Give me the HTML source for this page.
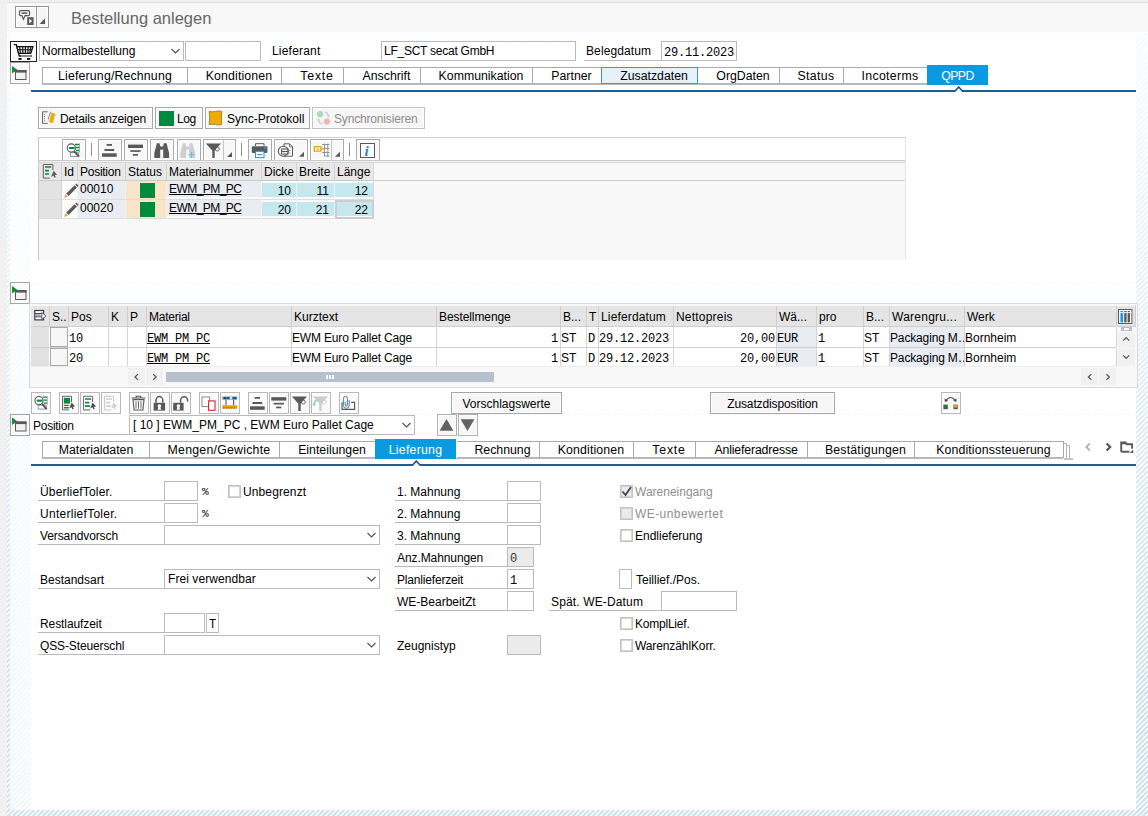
<!DOCTYPE html><html><head><meta charset="utf-8"><title>Bestellung anlegen</title><style>
*{box-sizing:border-box;margin:0;padding:0}
html,body{width:1148px;height:816px;overflow:hidden;background:#fff}
body{position:relative;font-family:"Liberation Sans",sans-serif;font-size:12px;color:#000}
.a{position:absolute}
.t{position:absolute;white-space:pre;line-height:14px;font-size:12px}
.m{position:absolute;white-space:pre;line-height:14px;font-size:12px;letter-spacing:-0.2px;font-family:"Liberation Mono",monospace}
.f{position:absolute;border:1px solid #bababa;background:#fff}
.fg{position:absolute;border:1px solid #b9b9b9;background:#ebebeb}
.u{position:absolute;height:1px;background:#b9b9b9}
.btn{position:absolute;border:1px solid #a6a6a6;background:#f6f6f6;box-shadow:inset 0 0 0 1px #fdfdfd}
.tab{position:absolute;top:0;height:17px;border:1px solid #a9a9a9;border-bottom-color:#b4b4b4;border-left:none;background:#fff;text-align:center;font-size:12.3px;line-height:16px;white-space:pre}
.tabs{position:absolute;height:19px}
.tabs .sh{position:absolute;left:0;top:17px;height:1px;background:#bcbcbc}
.cb{position:absolute;width:13px;height:13px;border:1px solid #c2c2c2;background:#fff;box-shadow:inset 0 0 0 1px #d4d4d4}
.h1{background-image:repeating-linear-gradient(135deg,#cfe4f2 0,#cfe4f2 2.12px,#fff 2.12px,#fff 3.5355px)}
.sv{position:absolute;overflow:visible}
</style></head><body>
<div class="a" style="left:0;top:0;width:1148px;height:32px;background:#f8f8f8"></div>
<div class="a" style="left:0;top:0;width:1148px;height:2px;background:#f0f0f0"></div>
<div class="a" style="left:0;top:2px;width:1148px;height:1px;background:#dedede"></div>
<div class="a" style="left:0;top:0;width:7px;height:816px;background:#f1f1f1"></div>
<svg class="a" style="left:0;top:0" width="1148" height="816" viewBox="0 0 1148 816" shape-rendering="crispEdges"><defs><pattern id="hp" x="0" y="0" width="5" height="5" patternUnits="userSpaceOnUse"><g fill="#cfe4f2"><rect x="2" y="0" width="1" height="1"/><rect x="3" y="0" width="1" height="1"/><rect x="4" y="0" width="1" height="1"/><rect x="1" y="1" width="1" height="1"/><rect x="2" y="1" width="1" height="1"/><rect x="3" y="1" width="1" height="1"/><rect x="0" y="2" width="1" height="1"/><rect x="1" y="2" width="1" height="1"/><rect x="2" y="2" width="1" height="1"/><rect x="4" y="3" width="1" height="1"/><rect x="0" y="3" width="1" height="1"/><rect x="1" y="3" width="1" height="1"/><rect x="3" y="4" width="1" height="1"/><rect x="4" y="4" width="1" height="1"/><rect x="0" y="4" width="1" height="1"/></g></pattern><linearGradient id="fg" gradientUnits="userSpaceOnUse" x1="0" y1="33" x2="0" y2="680"><stop offset="0" stop-color="#fff" stop-opacity="0.14"/><stop offset="1" stop-color="#fff" stop-opacity="1"/></linearGradient><linearGradient id="fg2" gradientUnits="userSpaceOnUse" x1="0" y1="93" x2="0" y2="810"><stop offset="0" stop-color="#fff" stop-opacity="0.06"/><stop offset="1" stop-color="#fff" stop-opacity="0.29"/></linearGradient><mask id="fm" maskUnits="userSpaceOnUse" x="0" y="0" width="1148" height="816"><rect x="0" y="0" width="1148" height="816" fill="url(#fg)"/></mask><mask id="fw" maskUnits="userSpaceOnUse" x="0" y="0" width="1148" height="816"><rect x="0" y="0" width="1148" height="816" fill="url(#fg2)"/></mask></defs><rect x="1136" y="33" width="12" height="783" fill="url(#hp)" mask="url(#fm)"/><rect x="7" y="33" width="3" height="783" fill="url(#hp)" mask="url(#fm)"/><rect x="10" y="93" width="21" height="717" fill="url(#hp)" mask="url(#fw)"/><rect x="10" y="810" width="1126" height="6" fill="url(#hp)" opacity="1"/><rect x="10" y="32" width="1126" height="9" fill="url(#hp)" opacity="0.07"/><rect x="31" y="283" width="1105" height="21" fill="url(#hp)" opacity="0.09"/><rect x="31" y="414" width="1105" height="1" fill="url(#hp)" opacity="0.25"/><rect x="31" y="282" width="1105" height="1" fill="url(#hp)" opacity="0.2"/></svg>
<div class="btn" style="left:15px;top:6px;width:22px;height:22px;background:#f5f5f5;border-color:#959595;box-shadow:inset 0 0 0 1px #fff"></div>
<div class="btn" style="left:36px;top:6px;width:13px;height:22px;background:#f5f5f5;border-color:#959595;box-shadow:inset 0 0 0 1px #fff"></div>
<div class="t" style="left:71px;top:8px;font-size:16.5px;line-height:20px;color:#666">Bestellung anlegen</div>
<div class="a" style="left:10px;top:41px;width:27px;height:21px;border:1px solid #222;background:#fafafa"></div>
<div class="f" style="left:39px;top:41px;width:145px;height:20px"></div>
<div class="t" style="left:42px;top:44px">Normalbestellung</div>
<div class="f" style="left:185px;top:41px;width:76px;height:20px"></div>
<div class="t" style="left:272px;top:44px;letter-spacing:0.200px">Lieferant</div>
<div class="u" style="left:269px;top:60px;width:113px"></div>
<div class="f" style="left:381px;top:41px;width:195px;height:20px"></div>
<div class="t" style="left:384px;top:44px;letter-spacing:-0.247px">LF_SCT secat GmbH</div>
<div class="t" style="left:586px;top:44px;letter-spacing:0.100px">Belegdatum</div>
<div class="u" style="left:584px;top:60px;width:78px"></div>
<div class="f" style="left:661px;top:41px;width:76px;height:20px"></div>
<div class="m" style="left:664px;top:46px">29.11.2023</div>
<div class="btn" style="left:10px;top:62px;width:20px;height:22px;border-color:#a4a4a4;background:#fafafa"></div>
<div class="tabs" style="left:42px;top:67px;width:946px">
<div class="sh" style="width:946px"></div>
<div class="a" style="left:0;top:0;width:1px;height:17px;background:#a9a9a9"></div>
<div class="tab" style="left:1px;width:145px;letter-spacing:0.17px;">Lieferung/Rechnung</div>
<div class="tab" style="left:146px;width:94px;padding-left:9px;letter-spacing:0.15px;">Konditionen</div>
<div class="tab" style="left:240px;width:62px;padding-left:9px;letter-spacing:0.8px;">Texte</div>
<div class="tab" style="left:302px;width:77px;padding-left:9px;">Anschrift</div>
<div class="tab" style="left:379px;width:112px;padding-left:9px;">Kommunikation</div>
<div class="tab" style="left:491px;width:69px;padding-left:9px;">Partner</div>
<div class="tab" style="left:559px;width:97px;border:1px solid #3a94d6;background:#e5f1fb;z-index:1;padding-left:9px;">Zusatzdaten</div>
<div class="tab" style="left:656px;width:82px;padding-left:9px;">OrgDaten</div>
<div class="tab" style="left:738px;width:64px;padding-left:9px;letter-spacing:0.35px;">Status</div>
<div class="tab" style="left:802px;width:84px;padding-left:9px;letter-spacing:0.35px;">Incoterms</div>
<div class="tab" style="left:885px;width:61px;top:-2px;height:20px;line-height:23px;border:none;background:#0a9ae0;color:#fff;z-index:2;letter-spacing:-0.6px;">QPPD</div>
</div>
<div class="a" style="left:31px;top:90px;width:1105px;height:2px;background:#1f5c90"></div>
<svg class="sv" style="left:951px;top:85px" width="14" height="7" viewBox="0 0 14 7"><path d="M2.00 7 L7.70 0.7 L13.40 7 Z" fill="#1f5c90"/><path d="M4.30 7 L7.70 3.2 L11.10 7 Z" fill="#fff"/></svg>
<div class="btn" style="left:38px;top:107px;width:115px;height:22px"></div>
<div class="t" style="left:60px;top:112px;letter-spacing:-0.169px">Details anzeigen</div>
<div class="btn" style="left:155px;top:107px;width:48px;height:22px"></div>
<div class="a" style="left:159px;top:111px;width:15px;height:15px;background:#008a3e"></div>
<div class="t" style="left:177px;top:112px;letter-spacing:-0.433px">Log</div>
<div class="btn" style="left:205px;top:107px;width:105px;height:22px"></div>
<svg class="sv" style="left:208px;top:110px" width="16" height="16" viewBox="0 0 16 16"><path d="M1.2 1.4 q3.4 0.8 6.4 0 t6.2 0 q-0.9 6.6 0 13.2 q-3.2 0.8 -6.2 0 t-6.4 0 q0.9 -6.6 0 -13.2z" fill="#f0ab00" stroke="#8a7440" stroke-width="0.8"/></svg>
<div class="t" style="left:227px;top:112px">Sync-Protokoll</div>
<div class="btn" style="left:312px;top:107px;width:113px;height:22px;border-color:#c3c3c3"></div>
<div class="t" style="left:334px;top:112px;color:#8c8c8c;letter-spacing:-0.167px">Synchronisieren</div>
<div class="a" style="left:38px;top:137px;width:868px;height:123px;background:#f8f8f8;border-top:1px solid #d0d0d0;border-left:1px solid #c8c8c8;border-right:1px solid #e4e4e4"></div>
<div class="a" style="left:39px;top:138px;width:866px;height:23px;background:#fff;border-bottom:1px solid #c9c9c9"></div>
<div class="a" style="left:39px;top:161px;width:866px;height:1px;background:#f2f2f2"></div>
<div class="a" style="left:39px;top:162px;width:866px;height:1px;background:#d6d6d6"></div>
<div class="a" style="left:39px;top:180px;width:866px;height:1px;background:#cbcbcb"></div>
<div class="btn" style="left:62px;top:139px;width:24px;height:21px;border-color:#a9a9a9;border-bottom:none;background:#f8f8f8"></div>
<div class="btn" style="left:98px;top:139px;width:24px;height:21px;border-color:#a9a9a9;border-bottom:none;background:#f8f8f8"></div>
<div class="btn" style="left:124px;top:139px;width:24px;height:21px;border-color:#a9a9a9;border-bottom:none;background:#f8f8f8"></div>
<div class="btn" style="left:150px;top:139px;width:24px;height:21px;border-color:#a9a9a9;border-bottom:none;background:#f8f8f8"></div>
<div class="btn" style="left:177px;top:139px;width:24px;height:21px;border-color:#a9a9a9;border-bottom:none;background:#f8f8f8"></div>
<div class="btn" style="left:203px;top:139px;width:33px;height:21px;border-color:#a9a9a9;border-bottom:none;background:#f8f8f8"></div>
<div class="btn" style="left:248px;top:139px;width:24px;height:21px;border-color:#a9a9a9;border-bottom:none;background:#f8f8f8"></div>
<div class="btn" style="left:274px;top:139px;width:34px;height:21px;border-color:#a9a9a9;border-bottom:none;background:#f8f8f8"></div>
<div class="btn" style="left:310px;top:139px;width:34px;height:21px;border-color:#a9a9a9;border-bottom:none;background:#f8f8f8"></div>
<div class="btn" style="left:356px;top:139px;width:24px;height:21px;border-color:#a9a9a9;border-bottom:none;background:#f8f8f8"></div>
<div class="a" style="left:223px;top:140px;width:1px;height:20px;background:#c6c6c6"></div>
<div class="a" style="left:331px;top:140px;width:1px;height:20px;background:#c6c6c6"></div>
<div class="a" style="left:91px;top:143px;width:1px;height:13px;background:#8f8f8f"></div>
<div class="a" style="left:241px;top:143px;width:1px;height:13px;background:#8f8f8f"></div>
<div class="a" style="left:349px;top:143px;width:1px;height:13px;background:#8f8f8f"></div>
<div class="a" style="left:39px;top:163px;width:335px;height:17px;background:#e8e8e8"></div>
<div class="a" style="left:61px;top:163px;width:1px;height:17px;background:#d2d2d2"></div>
<div class="a" style="left:77px;top:163px;width:1px;height:17px;background:#d2d2d2"></div>
<div class="t" style="left:64px;top:165px">Id</div>
<div class="a" style="left:125px;top:163px;width:1px;height:17px;background:#d2d2d2"></div>
<div class="t" style="left:80px;top:165px;letter-spacing:-0.263px">Position</div>
<div class="a" style="left:166px;top:163px;width:1px;height:17px;background:#d2d2d2"></div>
<div class="t" style="left:128px;top:165px">Status</div>
<div class="a" style="left:261px;top:163px;width:1px;height:17px;background:#d2d2d2"></div>
<div class="t" style="left:169px;top:165px;letter-spacing:-0.121px">Materialnummer</div>
<div class="a" style="left:296px;top:163px;width:1px;height:17px;background:#d2d2d2"></div>
<div class="t" style="left:264px;top:165px">Dicke</div>
<div class="a" style="left:334px;top:163px;width:1px;height:17px;background:#d2d2d2"></div>
<div class="t" style="left:299px;top:165px">Breite</div>
<div class="a" style="left:373px;top:163px;width:1px;height:17px;background:#d2d2d2"></div>
<div class="t" style="left:337px;top:165px">Länge</div>
<div class="a" style="left:39px;top:181px;width:335px;height:18px;background:#fbfbfb"></div>
<div class="a" style="left:39px;top:181px;width:22px;height:18px;background:#e3e3e3"></div>
<div class="a" style="left:78px;top:181px;width:47px;height:18px;background:#e9edf1"></div>
<div class="t" style="left:80px;top:182px">00010</div>
<div class="a" style="left:126px;top:181px;width:40px;height:18px;background:#f9e5c9"></div>
<div class="a" style="left:140px;top:183px;width:15px;height:15px;background:#008a3e"></div>
<div class="a" style="left:167px;top:181px;width:94px;height:16px;background:#e9edf1"></div>
<div class="t" style="left:169px;top:182px;text-decoration:underline;letter-spacing:-0.55px">EWM_PM_PC</div>
<div class="a" style="left:262px;top:183px;width:34px;height:14px;background:#c4e8ee"></div>
<div class="t" style="left:262px;top:184px;width:29px;text-align:right">10</div>
<div class="a" style="left:297px;top:183px;width:37px;height:14px;background:#c4e8ee"></div>
<div class="t" style="left:297px;top:184px;width:32px;text-align:right">11</div>
<div class="a" style="left:335px;top:183px;width:38px;height:14px;background:#c4e8ee"></div>
<div class="t" style="left:335px;top:184px;width:33px;text-align:right">12</div>
<div class="a" style="left:39px;top:199px;width:335px;height:1px;background:#dcdcdc"></div>
<div class="a" style="left:39px;top:200px;width:335px;height:18px;background:#fbfbfb"></div>
<div class="a" style="left:39px;top:200px;width:22px;height:18px;background:#e3e3e3"></div>
<div class="a" style="left:78px;top:200px;width:47px;height:18px;background:#e9edf1"></div>
<div class="t" style="left:80px;top:201px">00020</div>
<div class="a" style="left:126px;top:200px;width:40px;height:18px;background:#f9e5c9"></div>
<div class="a" style="left:140px;top:202px;width:15px;height:15px;background:#008a3e"></div>
<div class="a" style="left:167px;top:200px;width:94px;height:16px;background:#e9edf1"></div>
<div class="t" style="left:169px;top:201px;text-decoration:underline;letter-spacing:-0.55px">EWM_PM_PC</div>
<div class="a" style="left:262px;top:202px;width:34px;height:14px;background:#c4e8ee"></div>
<div class="t" style="left:262px;top:203px;width:29px;text-align:right">20</div>
<div class="a" style="left:297px;top:202px;width:37px;height:14px;background:#c4e8ee"></div>
<div class="t" style="left:297px;top:203px;width:32px;text-align:right">21</div>
<div class="a" style="left:335px;top:202px;width:38px;height:14px;background:#c4e8ee"></div>
<div class="t" style="left:335px;top:203px;width:33px;text-align:right">22</div>
<div class="a" style="left:39px;top:218px;width:335px;height:1px;background:#dcdcdc"></div>
<div class="a" style="left:61px;top:181px;width:1px;height:38px;background:#f1f1f1"></div>
<div class="a" style="left:77px;top:181px;width:1px;height:38px;background:#f1f1f1"></div>
<div class="a" style="left:125px;top:181px;width:1px;height:38px;background:#f1f1f1"></div>
<div class="a" style="left:166px;top:181px;width:1px;height:38px;background:#f1f1f1"></div>
<div class="a" style="left:261px;top:181px;width:1px;height:38px;background:#f1f1f1"></div>
<div class="a" style="left:296px;top:181px;width:1px;height:38px;background:#f1f1f1"></div>
<div class="a" style="left:334px;top:181px;width:1px;height:38px;background:#f1f1f1"></div>
<div class="a" style="left:61px;top:181px;width:1px;height:38px;background:#d4d4d4"></div>
<div class="a" style="left:373px;top:162px;width:1px;height:57px;background:#dadada"></div>
<div class="a" style="left:335px;top:200px;width:39px;height:19px;border:2px solid #cdcdcd"></div>
<div class="btn" style="left:10px;top:282px;width:20px;height:22px;border-color:#a4a4a4;background:#fafafa"></div>
<div class="a" style="left:29px;top:303px;width:1109px;height:85px;background:#f8f8f8;border:1px solid #dadada"></div>
<div class="a" style="left:31px;top:306px;width:1105px;height:20px;background:#e5e5e5"></div>
<div class="a" style="left:1135px;top:305px;width:1px;height:22px;background:#cfcfcf"></div>
<div class="a" style="left:1117px;top:326px;width:19px;height:1px;background:#cfcfcf"></div>
<div class="a" style="left:49px;top:306px;width:1px;height:20px;background:#cfcfcf"></div>
<div class="a" style="left:68px;top:306px;width:1px;height:20px;background:#cfcfcf"></div>
<div class="t" style="left:52px;top:310px">S..</div>
<div class="a" style="left:108px;top:306px;width:1px;height:20px;background:#cfcfcf"></div>
<div class="t" style="left:71px;top:310px">Pos</div>
<div class="a" style="left:127px;top:306px;width:1px;height:20px;background:#cfcfcf"></div>
<div class="t" style="left:111px;top:310px">K</div>
<div class="a" style="left:146px;top:306px;width:1px;height:20px;background:#cfcfcf"></div>
<div class="t" style="left:130px;top:310px">P</div>
<div class="a" style="left:291px;top:306px;width:1px;height:20px;background:#cfcfcf"></div>
<div class="t" style="left:149px;top:310px;letter-spacing:-0.237px">Material</div>
<div class="a" style="left:436px;top:306px;width:1px;height:20px;background:#cfcfcf"></div>
<div class="t" style="left:294px;top:310px">Kurztext</div>
<div class="a" style="left:560px;top:306px;width:1px;height:20px;background:#cfcfcf"></div>
<div class="t" style="left:439px;top:310px;letter-spacing:-0.083px">Bestellmenge</div>
<div class="a" style="left:586px;top:306px;width:1px;height:20px;background:#cfcfcf"></div>
<div class="t" style="left:563px;top:310px">B...</div>
<div class="a" style="left:598px;top:306px;width:1px;height:20px;background:#cfcfcf"></div>
<div class="t" style="left:589px;top:310px">T</div>
<div class="a" style="left:673px;top:306px;width:1px;height:20px;background:#cfcfcf"></div>
<div class="t" style="left:601px;top:310px;letter-spacing:0.145px">Lieferdatum</div>
<div class="a" style="left:776px;top:306px;width:1px;height:20px;background:#cfcfcf"></div>
<div class="t" style="left:676px;top:310px;letter-spacing:0.200px">Nettopreis</div>
<div class="a" style="left:816px;top:306px;width:1px;height:20px;background:#cfcfcf"></div>
<div class="t" style="left:779px;top:310px">Wä...</div>
<div class="a" style="left:863px;top:306px;width:1px;height:20px;background:#cfcfcf"></div>
<div class="t" style="left:819px;top:310px">pro</div>
<div class="a" style="left:889px;top:306px;width:1px;height:20px;background:#cfcfcf"></div>
<div class="t" style="left:866px;top:310px">B...</div>
<div class="a" style="left:964px;top:306px;width:1px;height:20px;background:#cfcfcf"></div>
<div class="t" style="left:892px;top:310px;letter-spacing:0.255px">Warengru...</div>
<div class="a" style="left:1116px;top:306px;width:1px;height:20px;background:#cfcfcf"></div>
<div class="t" style="left:967px;top:310px">Werk</div>
<div class="a" style="left:31px;top:326px;width:18px;height:21px;background:#e1e1e1;border-top:1px solid #cfcfcf"></div>
<div class="a" style="left:49px;top:326px;width:1067px;height:21px;background:#fff;border-top:1px solid #cfcfcf"></div>
<div class="a" style="left:50px;top:327px;width:18px;height:20px;background:#f6f6f6;border:1px solid #a9a9a9"></div>
<div class="a" style="left:777px;top:327px;width:39px;height:20px;background:#e9edf3"></div>
<div class="a" style="left:890px;top:327px;width:74px;height:20px;background:#e9edf3"></div>
<div class="a" style="left:108px;top:327px;width:1px;height:20px;background:#d4d4d4"></div>
<div class="a" style="left:127px;top:327px;width:1px;height:20px;background:#d4d4d4"></div>
<div class="a" style="left:146px;top:327px;width:1px;height:20px;background:#d4d4d4"></div>
<div class="a" style="left:291px;top:327px;width:1px;height:20px;background:#d4d4d4"></div>
<div class="a" style="left:436px;top:327px;width:1px;height:20px;background:#d4d4d4"></div>
<div class="a" style="left:560px;top:327px;width:1px;height:20px;background:#d4d4d4"></div>
<div class="a" style="left:586px;top:327px;width:1px;height:20px;background:#d4d4d4"></div>
<div class="a" style="left:598px;top:327px;width:1px;height:20px;background:#d4d4d4"></div>
<div class="a" style="left:673px;top:327px;width:1px;height:20px;background:#d4d4d4"></div>
<div class="a" style="left:776px;top:327px;width:1px;height:20px;background:#d4d4d4"></div>
<div class="a" style="left:816px;top:327px;width:1px;height:20px;background:#d4d4d4"></div>
<div class="a" style="left:863px;top:327px;width:1px;height:20px;background:#d4d4d4"></div>
<div class="a" style="left:889px;top:327px;width:1px;height:20px;background:#d4d4d4"></div>
<div class="a" style="left:964px;top:327px;width:1px;height:20px;background:#d4d4d4"></div>
<div class="a" style="left:1116px;top:327px;width:1px;height:20px;background:#d4d4d4"></div>
<div class="m" style="left:69px;top:332px">10</div>
<div class="m" style="left:147px;top:332px;text-decoration:underline">EWM_PM_PC</div>
<div class="t" style="left:292px;top:331px;letter-spacing:-0.170px">EWM Euro Pallet Cage</div>
<div class="m" style="left:551px;top:332px">1</div>
<div class="t" style="left:561px;top:331px">ST</div>
<div class="m" style="left:588px;top:332px">D</div>
<div class="m" style="left:599px;top:332px">29.12.2023</div>
<div class="m" style="left:740px;top:332px">20,00</div>
<div class="m" style="left:777px;top:332px">EUR</div>
<div class="m" style="left:818px;top:332px">1</div>
<div class="t" style="left:864px;top:331px">ST</div>
<div class="t" style="left:890px;top:331px;width:74px;overflow:hidden;letter-spacing:-0.15px">Packaging M…</div>
<div class="t" style="left:965px;top:331px">Bornheim</div>
<div class="a" style="left:31px;top:347px;width:18px;height:19px;background:#e1e1e1;border-top:1px solid #cfcfcf"></div>
<div class="a" style="left:49px;top:347px;width:1067px;height:19px;background:#fff;border-top:1px solid #cfcfcf"></div>
<div class="a" style="left:50px;top:348px;width:18px;height:18px;background:#f6f6f6;border:1px solid #a9a9a9"></div>
<div class="a" style="left:777px;top:348px;width:39px;height:18px;background:#e9edf3"></div>
<div class="a" style="left:890px;top:348px;width:74px;height:18px;background:#e9edf3"></div>
<div class="a" style="left:108px;top:348px;width:1px;height:18px;background:#d4d4d4"></div>
<div class="a" style="left:127px;top:348px;width:1px;height:18px;background:#d4d4d4"></div>
<div class="a" style="left:146px;top:348px;width:1px;height:18px;background:#d4d4d4"></div>
<div class="a" style="left:291px;top:348px;width:1px;height:18px;background:#d4d4d4"></div>
<div class="a" style="left:436px;top:348px;width:1px;height:18px;background:#d4d4d4"></div>
<div class="a" style="left:560px;top:348px;width:1px;height:18px;background:#d4d4d4"></div>
<div class="a" style="left:586px;top:348px;width:1px;height:18px;background:#d4d4d4"></div>
<div class="a" style="left:598px;top:348px;width:1px;height:18px;background:#d4d4d4"></div>
<div class="a" style="left:673px;top:348px;width:1px;height:18px;background:#d4d4d4"></div>
<div class="a" style="left:776px;top:348px;width:1px;height:18px;background:#d4d4d4"></div>
<div class="a" style="left:816px;top:348px;width:1px;height:18px;background:#d4d4d4"></div>
<div class="a" style="left:863px;top:348px;width:1px;height:18px;background:#d4d4d4"></div>
<div class="a" style="left:889px;top:348px;width:1px;height:18px;background:#d4d4d4"></div>
<div class="a" style="left:964px;top:348px;width:1px;height:18px;background:#d4d4d4"></div>
<div class="a" style="left:1116px;top:348px;width:1px;height:18px;background:#d4d4d4"></div>
<div class="m" style="left:69px;top:352px">20</div>
<div class="m" style="left:147px;top:352px;text-decoration:underline">EWM_PM_PC</div>
<div class="t" style="left:292px;top:351px;letter-spacing:-0.170px">EWM Euro Pallet Cage</div>
<div class="m" style="left:551px;top:352px">1</div>
<div class="t" style="left:561px;top:351px">ST</div>
<div class="m" style="left:588px;top:352px">D</div>
<div class="m" style="left:599px;top:352px">29.12.2023</div>
<div class="m" style="left:740px;top:352px">20,00</div>
<div class="m" style="left:777px;top:352px">EUR</div>
<div class="m" style="left:818px;top:352px">1</div>
<div class="t" style="left:864px;top:351px">ST</div>
<div class="t" style="left:890px;top:351px;width:74px;overflow:hidden;letter-spacing:-0.15px">Packaging M…</div>
<div class="t" style="left:965px;top:351px">Bornheim</div>
<div class="a" style="left:30px;top:366px;width:1087px;height:1px;background:#ececec"></div>
<div class="a" style="left:128px;top:368px;width:17px;height:17px;background:#f1f1f1"></div>
<div class="a" style="left:146px;top:368px;width:17px;height:17px;background:#f1f1f1"></div>
<div class="a" style="left:1081px;top:368px;width:17px;height:17px;background:#f1f1f1"></div>
<div class="a" style="left:1099px;top:368px;width:17px;height:17px;background:#f1f1f1"></div>
<div class="a" style="left:166px;top:372px;width:328px;height:10px;background:#b7c1cd"></div>
<div class="a" style="left:326px;top:375px;width:9px;height:4px;background:repeating-linear-gradient(90deg,#fff 0,#fff 2px,transparent 2px,transparent 3px)"></div>
<div class="a" style="left:1118px;top:332px;width:17px;height:16px;background:#f1f1f1"></div><div class="a" style="left:1118px;top:349px;width:17px;height:17px;background:#f1f1f1"></div>
<div class="a" style="left:1121px;top:327px;width:11px;height:4px;background:#b7c1cd"></div><div class="a" style="left:1124px;top:328px;width:5px;height:2px;background:#fff"></div>
<div class="btn" style="left:31px;top:392px;width:20px;height:22px;border-color:#b8b8b8;background:#fafafa"></div>
<div class="btn" style="left:59px;top:392px;width:20px;height:22px;border-color:#b8b8b8;background:#fafafa"></div>
<div class="btn" style="left:80px;top:392px;width:20px;height:22px;border-color:#b8b8b8;background:#fafafa"></div>
<div class="btn" style="left:101px;top:392px;width:20px;height:22px;border-color:#b8b8b8;background:#fafafa"></div>
<div class="btn" style="left:129px;top:392px;width:20px;height:22px;border-color:#b8b8b8;background:#fafafa"></div>
<div class="btn" style="left:150px;top:392px;width:20px;height:22px;border-color:#b8b8b8;background:#fafafa"></div>
<div class="btn" style="left:171px;top:392px;width:20px;height:22px;border-color:#b8b8b8;background:#fafafa"></div>
<div class="btn" style="left:199px;top:392px;width:20px;height:22px;border-color:#b8b8b8;background:#fafafa"></div>
<div class="btn" style="left:220px;top:392px;width:20px;height:22px;border-color:#b8b8b8;background:#fafafa"></div>
<div class="btn" style="left:248px;top:392px;width:20px;height:22px;border-color:#b8b8b8;background:#fafafa"></div>
<div class="btn" style="left:269px;top:392px;width:20px;height:22px;border-color:#b8b8b8;background:#fafafa"></div>
<div class="btn" style="left:290px;top:392px;width:20px;height:22px;border-color:#b8b8b8;background:#fafafa"></div>
<div class="btn" style="left:311px;top:392px;width:20px;height:22px;border-color:#b8b8b8;background:#fafafa"></div>
<div class="btn" style="left:339px;top:392px;width:20px;height:22px;border-color:#b8b8b8;background:#fafafa"></div>
<div class="btn" style="left:941px;top:392px;width:20px;height:22px;border-color:#b8b8b8;background:#fafafa"></div>
<div class="btn" style="left:451px;top:392px;width:111px;height:22px"></div>
<div class="t" style="left:451px;top:397px;width:111px;text-align:center">Vorschlagswerte</div>
<div class="btn" style="left:710px;top:392px;width:125px;height:22px"></div>
<div class="t" style="left:710px;top:397px;width:125px;text-align:center;letter-spacing:-0.129px">Zusatzdisposition</div>
<div class="btn" style="left:10px;top:414px;width:20px;height:22px;border-color:#a4a4a4;background:#fafafa"></div>
<div class="t" style="left:33px;top:419px;letter-spacing:-0.263px">Position</div>
<div class="u" style="left:31px;top:434px;width:99px"></div>
<div class="f" style="left:129px;top:415px;width:286px;height:20px"></div>
<div class="t" style="left:133px;top:418px">[ 10 ] EWM_PM_PC , EWM Euro Pallet Cage</div>
<div class="btn" style="left:437px;top:414px;width:20px;height:22px;border-color:#b0b0b0"></div>
<div class="btn" style="left:458px;top:414px;width:20px;height:22px;border-color:#b0b0b0"></div>
<div class="tabs" style="left:42px;top:441px;width:1021px">
<div class="sh" style="width:1021px"></div>
<div class="a" style="left:0;top:0;width:1px;height:17px;background:#a9a9a9"></div>
<div class="tab" style="left:1px;width:107px;">Materialdaten</div>
<div class="tab" style="left:108px;width:130px;padding-left:9px;letter-spacing:0.25px;">Mengen/Gewichte</div>
<div class="tab" style="left:238px;width:96px;padding-left:9px;">Einteilungen</div>
<div class="tab" style="left:333px;width:81px;top:-2px;height:20px;line-height:23px;border:none;background:#0a9ae0;color:#fff;z-index:2;letter-spacing:0.25px;">Lieferung</div>
<div class="tab" style="left:415px;width:83px;padding-left:9px;">Rechnung</div>
<div class="tab" style="left:498px;width:94px;padding-left:9px;letter-spacing:0.15px;">Konditionen</div>
<div class="tab" style="left:592px;width:62px;padding-left:9px;letter-spacing:0.8px;">Texte</div>
<div class="tab" style="left:654px;width:112px;padding-left:9px;letter-spacing:-0.15px;">Anlieferadresse</div>
<div class="tab" style="left:766px;width:107px;padding-left:9px;letter-spacing:0.2px;">Bestätigungen</div>
<div class="tab" style="left:873px;width:149px;padding-left:9px;letter-spacing:0.13px;">Konditionssteuerung</div>
</div>
<div class="a" style="left:1064px;top:443px;width:3px;height:15px;border-top:1px solid #b5b5b5;border-right:1px solid #b5b5b5"></div><div class="a" style="left:1067px;top:445px;width:3px;height:13px;border-top:1px solid #b5b5b5;border-right:1px solid #b5b5b5"></div><div class="a" style="left:1064px;top:458px;width:9px;height:2px;background:#c4c4c4"></div>
<div class="a" style="left:31px;top:464px;width:1105px;height:2px;background:#1f5c90"></div>
<svg class="sv" style="left:409px;top:459px" width="14" height="7" viewBox="0 0 14 7"><path d="M1.60 7 L7.30 0.7 L13.00 7 Z" fill="#1f5c90"/><path d="M3.90 7 L7.30 3.2 L10.70 7 Z" fill="#fff"/></svg>
<div class="t" style="left:40px;top:485px;letter-spacing:0.179px">ÜberliefToler.</div>
<div class="u" style="left:38px;top:500px;width:127px"></div>
<div class="f" style="left:164px;top:481px;width:34px;height:20px"></div>
<div class="m" style="left:202px;top:485px;font-size:11px;letter-spacing:0">%</div>
<div class="cb" style="left:228px;top:485px"></div>
<div class="t" style="left:243px;top:485px;letter-spacing:0.120px">Unbegrenzt</div>
<div class="t" style="left:40px;top:507px;letter-spacing:0.273px">UnterliefToler.</div>
<div class="u" style="left:38px;top:522px;width:127px"></div>
<div class="f" style="left:164px;top:503px;width:34px;height:20px"></div>
<div class="m" style="left:202px;top:507px;font-size:11px;letter-spacing:0">%</div>
<div class="t" style="left:40px;top:529px;letter-spacing:-0.108px">Versandvorsch</div>
<div class="u" style="left:38px;top:544px;width:127px"></div>
<div class="f" style="left:164px;top:525px;width:216px;height:20px"></div>
<svg class="sv" style="left:366px;top:532px" width="11" height="7" viewBox="0 0 11 7"><path d="M1.5 1 L5.5 5 L9.5 1" fill="none" stroke="#4a4f5a" stroke-width="1.1"/></svg>
<div class="t" style="left:40px;top:573px">Bestandsart</div>
<div class="u" style="left:38px;top:588px;width:127px"></div>
<div class="f" style="left:164px;top:569px;width:216px;height:20px"></div>
<svg class="sv" style="left:366px;top:576px" width="11" height="7" viewBox="0 0 11 7"><path d="M1.5 1 L5.5 5 L9.5 1" fill="none" stroke="#4a4f5a" stroke-width="1.1"/></svg>
<div class="t" style="left:168px;top:572px;letter-spacing:0.067px">Frei verwendbar</div>
<div class="t" style="left:40px;top:617px;letter-spacing:-0.083px">Restlaufzeit</div>
<div class="u" style="left:38px;top:632px;width:127px"></div>
<div class="f" style="left:164px;top:613px;width:41px;height:20px"></div>
<div class="f" style="left:206px;top:613px;width:13px;height:20px"></div>
<div class="m" style="left:209px;top:618px">T</div>
<div class="t" style="left:40px;top:639px;letter-spacing:-0.129px">QSS-Steuerschl</div>
<div class="u" style="left:38px;top:654px;width:127px"></div>
<div class="f" style="left:164px;top:635px;width:216px;height:20px"></div>
<svg class="sv" style="left:366px;top:642px" width="11" height="7" viewBox="0 0 11 7"><path d="M1.5 1 L5.5 5 L9.5 1" fill="none" stroke="#4a4f5a" stroke-width="1.1"/></svg>
<div class="t" style="left:397px;top:485px">1. Mahnung</div>
<div class="u" style="left:395px;top:500px;width:113px"></div>
<div class="f" style="left:507px;top:481px;width:34px;height:20px"></div>
<div class="t" style="left:397px;top:507px">2. Mahnung</div>
<div class="u" style="left:395px;top:522px;width:113px"></div>
<div class="f" style="left:507px;top:503px;width:34px;height:20px"></div>
<div class="t" style="left:397px;top:529px">3. Mahnung</div>
<div class="u" style="left:395px;top:544px;width:113px"></div>
<div class="f" style="left:507px;top:525px;width:34px;height:20px"></div>
<div class="t" style="left:397px;top:551px;letter-spacing:-0.092px">Anz.Mahnungen</div>
<div class="u" style="left:395px;top:566px;width:113px"></div>
<div class="fg" style="left:507px;top:547px;width:27px;height:20px"></div>
<div class="m" style="left:510px;top:552px;color:#333">0</div>
<div class="t" style="left:397px;top:573px;letter-spacing:-0.179px">Planlieferzeit</div>
<div class="u" style="left:395px;top:588px;width:113px"></div>
<div class="f" style="left:507px;top:569px;width:27px;height:20px"></div>
<div class="m" style="left:510px;top:574px">1</div>
<div class="t" style="left:397px;top:595px">WE-BearbeitZt</div>
<div class="u" style="left:395px;top:610px;width:113px"></div>
<div class="f" style="left:507px;top:591px;width:27px;height:20px"></div>
<div class="t" style="left:397px;top:639px">Zeugnistyp</div>
<div class="fg" style="left:507px;top:635px;width:34px;height:20px"></div>
<div class="t" style="left:551px;top:595px;letter-spacing:0.143px">Spät. WE-Datum</div>
<div class="u" style="left:549px;top:610px;width:113px"></div>
<div class="f" style="left:661px;top:591px;width:76px;height:20px"></div>
<div class="cb" style="left:620px;top:485px;background:#e8ecf0;"></div>
<svg class="sv" style="left:621px;top:486px" width="11" height="11" viewBox="0 0 11 11"><path d="M1.5 5.5 L4.5 9 L10 1" fill="none" stroke="#4a4a4a" stroke-width="1.9"/></svg>
<div class="t" style="left:635px;top:485px;color:#8e8e8e">Wareneingang</div>
<div class="cb" style="left:620px;top:507px;background:#e8ecf0;"></div>
<div class="t" style="left:635px;top:507px;color:#8e8e8e;letter-spacing:0.423px">WE-unbewertet</div>
<div class="cb" style="left:620px;top:529px;background:#fff;"></div>
<div class="t" style="left:635px;top:529px;color:#000">Endlieferung</div>
<div class="f" style="left:619px;top:569px;width:13px;height:20px"></div>
<div class="t" style="left:636px;top:573px">Teillief./Pos.</div>
<div class="cb" style="left:620px;top:617px;background:#fff;"></div>
<div class="t" style="left:635px;top:617px;color:#000;letter-spacing:-0.220px">KomplLief.</div>
<div class="cb" style="left:620px;top:639px;background:#fff;"></div>
<div class="t" style="left:635px;top:639px;color:#000;letter-spacing:-0.107px">WarenzählKorr.</div>
<svg class="sv" style="left:170px;top:48px" width="11" height="7" viewBox="0 0 11 7"><path d="M1.5 1 L5.5 5 L9.5 1" fill="none" stroke="#4a4f5a" stroke-width="1.1"/></svg>
<svg class="sv" style="left:401px;top:422px" width="11" height="7" viewBox="0 0 11 7"><path d="M1.5 1 L5.5 5 L9.5 1" fill="none" stroke="#4a4f5a" stroke-width="1.1"/></svg>
<svg class="a" style="left:0;top:0;pointer-events:none" width="1148" height="816" viewBox="0 0 1148 816"><path d="M20.6 10.6 h7.8 a1.1 1.1 0 0 1 1.1 1.1 v2.8 a1.1 1.1 0 0 1 -1.1 1.1 h-3.3 l-1.7 3.6 l-1.5 -3.6 h-1.3 a1.1 1.1 0 0 1 -1.1 -1.1 v-2.8 a1.1 1.1 0 0 1 1.1 -1.1z" fill="#f8f8f8" stroke="#595959" stroke-width="1.2"/><rect x="21.6" y="12.4" width="5.6" height="1.5" fill="#595959"/><rect x="27.2" y="17.2" width="6.4" height="7.8" fill="#595959"/><path d="M29.2 18.7 l3 2.4 l-3 2.4z" fill="#e8f6ff"/><path d="M45 18.2 v5.8 h-5.4z" fill="#595959"/><path d="M13.8 44.6 h2.6 l2.8 11.4 h12.6" fill="none" stroke="#111" stroke-width="1.3"/><path d="M16.8 46.6 h16.2 l-2.2 6.8 h-12.2z" fill="#e8e8e8" stroke="#111" stroke-width="1.2"/><path d="M19.6 46.6 l0.9 6.8 M22.6 46.6 l0.3 6.8 M25.4 46.6 v6.8 M28.2 46.6 l-0.4 6.8 M30.8 46.6 l-1 6.8 M17.4 49.8 h14.6" stroke="#111" stroke-width="1.1"/><path d="M21 56 h10" stroke="#aaa" stroke-width="1.4"/><rect x="18.4" y="58" width="3.2" height="1.9" fill="#111"/><rect x="27" y="58" width="3.2" height="1.9" fill="#111"/><path d="M12 66 L17.3 69.8 L12 73.6Z" fill="#0b8f2f"/><rect x="15.5" y="70.5" width="10.5" height="9" fill="#f2f2f2" stroke="#595959" stroke-width="1"/><rect x="15" y="70" width="11.5" height="2.6" fill="#595959"/><g transform="translate(0 220)"><path d="M12 66 L17.3 69.8 L12 73.6Z" fill="#0b8f2f"/><rect x="15.5" y="70.5" width="10.5" height="9" fill="#f2f2f2" stroke="#595959" stroke-width="1"/><rect x="15" y="70" width="11.5" height="2.6" fill="#595959"/></g><g transform="translate(0 351.5)"><path d="M12 66 L17.3 69.8 L12 73.6Z" fill="#0b8f2f"/><rect x="15.5" y="70.5" width="10.5" height="9" fill="#f2f2f2" stroke="#595959" stroke-width="1"/><rect x="15" y="70" width="11.5" height="2.6" fill="#595959"/></g><path d="M47.8 111.8 h-5.3 v11.6 h5.3" fill="none" stroke="#6a6a6a" stroke-width="1"/><path d="M44.3 113.8 v8" stroke="#7a4a9a" stroke-width="1" stroke-dasharray="1 1.2"/><path d="M51.6 112.6 l3.8 1.2 l-2.6 9.4 l-3.8 -1.2z" fill="#f0ab00"/><path d="M50.6 111.8 l-2.4 7.6" stroke="#6a7a9a" stroke-width="0.9"/><circle cx="320.1" cy="114.2" r="3.1" fill="#a9dbb9"/><circle cx="326.9" cy="121.6" r="3.1" fill="#f2b3b1"/><path d="M324.6 112.2 q3.4 0.2 3.8 3.6 M322.4 123.6 q-3.4 -0.2 -3.8 -3.6" fill="none" stroke="#cfcfcf" stroke-width="1.6"/><path d="M326.6 115.2 l3.6 0 l-1.8 2.6z M320.4 120.6 l-3.6 0 l1.8 -2.6z" fill="#cfcfcf"/><path d="M70.5 152.5 h8 v4 h-8z" fill="none" stroke="#8a8a9a" stroke-width="0.9"/><path d="M75 144.5 h4.5 M76 147.5 h3.5 M76 150.5 h3.5" stroke="#0a8a3a" stroke-width="1.3"/><path d="M79.5 143.5 v9" stroke="#9a9a9a" stroke-width="0.8"/><circle cx="71.3" cy="148" r="4.1" fill="#fff" fill-opacity="0.85" stroke="#595959" stroke-width="1.1"/><rect x="69" y="147" width="5.6" height="2.1" fill="#0a8a3a"/><path d="M74.3 151.3 L79 156.6" stroke="#595959" stroke-width="2"/><rect x="106.6" y="144" width="5.4" height="1.8" fill="#595959"/><rect x="104.5" y="149" width="9.7" height="2" fill="#595959"/><rect x="102" y="153.3" width="14.7" height="3.5" fill="#595959"/><rect x="128" y="144.6" width="15" height="3.4" fill="#595959"/><rect x="130.3" y="150.2" width="10.3" height="1.7" fill="#595959"/><rect x="132.8" y="154" width="5.2" height="1.7" fill="#595959"/><path d="M156.9 143.3 h2.6 l0.7 3 v11.6 h-5.9 v-5 z" fill="#595959"/><path d="M163.9 143.3 h2.6 l2.6 9.6 v5 h-5.9 v-11.6 z" fill="#595959"/><rect x="160" y="146.5" width="3.4" height="3.2" fill="#595959"/><g transform="translate(26 0)"><path d="M156.9 143.3 h2.6 l0.7 3 v11.6 h-5.9 v-5 z" fill="#cfcfcf"/><path d="M163.9 143.3 h2.6 l2.6 9.6 v5 h-5.9 v-11.6 z" fill="#cfcfcf"/><rect x="160" y="146.5" width="3.4" height="3.2" fill="#cfcfcf"/></g><path d="M188.4 154.8 h6.2 M191.5 151.7 v6.2" stroke="#5bbdec" stroke-width="1.1"/><path d="M205.8 143.4 h15.2 l-6.3 7 v7.6 h-2.4 v-7.6 z" fill="#595959"/><circle cx="217.3" cy="149" r="2" fill="none" stroke="#595959" stroke-width="0.9"/><path d="M232 157 v-5 l-5 5z" fill="#595959"/><path d="M255.5 146 v-2.3 h8.5 v2.3" fill="#fff" stroke="#595959" stroke-width="1"/><rect x="251.8" y="146.3" width="15.6" height="6.6" rx="1.2" fill="#595959"/><rect x="264" y="147.6" width="1.8" height="1.3" fill="#39a8e8"/><rect x="255.5" y="151.3" width="8.5" height="6.3" fill="#fff" stroke="#2c8fd6" stroke-width="1"/><path d="M257.3 154.6 h5" stroke="#2c8fd6" stroke-width="1.1"/><path d="M284 143.8 h5.5 l3 3 v9.4 h-8.5z" fill="#fff" stroke="#595959" stroke-width="1"/><path d="M289.5 143.8 v3 h3" fill="none" stroke="#595959" stroke-width="0.8"/><circle cx="283.3" cy="151.2" r="5" fill="#fff" fill-opacity="0.7" stroke="#595959" stroke-width="1.1"/><path d="M281.5 149 h6.5 v5 h-6.5z M281.5 151.5 h6.5" fill="none" stroke="#595959" stroke-width="1.1"/><path d="M290 150 v1 M290 152.5 v1" stroke="#595959" stroke-width="1"/><path d="M304 156.8 v-5 l-5 5z" fill="#595959"/><path d="M324.5 143.5 v13 M327.8 143.5 v13 M322 144.5 h7.5 M324.5 148.5 h5 M322 152.5 h7.5 M324.5 156 h5" fill="none" stroke="#8a8a8a" stroke-width="0.9"/><rect x="314.3" y="146.7" width="6.6" height="4.4" fill="#fff" stroke="#e9a300" stroke-width="1.3"/><rect x="316.5" y="148.2" width="2.2" height="1.5" fill="#e9a300"/><path d="M321 149 h3.5" stroke="#e9a300" stroke-width="1.2"/><path d="M340 156.8 v-5 l-5 5z" fill="#595959"/><rect x="360.5" y="143.5" width="14" height="14" fill="#fff" stroke="#595959" stroke-width="1"/><text x="364.6" y="155.6" font-family="Liberation Serif,serif" font-style="italic" font-weight="bold" font-size="15" fill="#1c8ad6">i</text><path d="M52.9 170 v-5.5 h-9.6 v13.6 h6.4" fill="none" stroke="#6a5a6a" stroke-width="1"/><path d="M45 167 h6.2 M45 170.6 h4 M45 174 h4" stroke="#0a8a3a" stroke-width="1.7"/><path d="M53.6 170.8 l-2.4 6 l2.3 -1.1 l1.1 2.1 l1.2 -0.6 l-1.1 -2.1 l2.4 -0.3z" fill="#5a5a5a"/><path d="M66.2 193.6 L74.6 185.2 L77 187.6 L68.6 196 Z" fill="#595959"/><path d="M64 198 L65.6 194.2 L68 196.6Z" fill="#e8a040"/><path d="M75.2 184.6 L76.4 183.4 L78.6 185.8 L77.6 187Z" fill="#595959"/><path d="M66.2 212.6 L74.6 204.2 L77 206.6 L68.6 215 Z" fill="#595959"/><path d="M64 217 L65.6 213.2 L68 215.6Z" fill="#e8a040"/><path d="M75.2 203.6 L76.4 202.4 L78.6 204.8 L77.6 206Z" fill="#595959"/><rect x="34.8" y="310.5" width="8.8" height="9.4" fill="#fff" stroke="#3a3a4a" stroke-width="1.2"/><path d="M34.8 313.6 h8.8 M34.8 316.8 h8.8" stroke="#3a3a4a" stroke-width="1"/><rect x="35.6" y="314.2" width="5" height="2" fill="#aaa"/><path d="M41.8 312.6 l4.2 3.4 l-4.2 3.4z" fill="#fff" stroke="#3a3a4a" stroke-width="0.8"/><rect x="1118.5" y="309.5" width="13.4" height="14" fill="#fff" stroke="#595959" stroke-width="1"/><rect x="1120.4" y="311" width="2.8" height="11.4" fill="#1c9ae0"/><rect x="1124.2" y="311" width="2.4" height="11.4" fill="#5a5a5a"/><rect x="1127.6" y="311" width="2.4" height="11.4" fill="#5a5a5a"/><path d="M1119 312.6 h12.4" stroke="#fff" stroke-width="0.9"/><g transform="translate(-32.3 252.6)"><path d="M70.5 152.5 h8 v4 h-8z" fill="none" stroke="#8a8a9a" stroke-width="0.9"/><path d="M75 144.5 h4.5 M76 147.5 h3.5 M76 150.5 h3.5" stroke="#0a8a3a" stroke-width="1.3"/><path d="M79.5 143.5 v9" stroke="#9a9a9a" stroke-width="0.8"/><circle cx="71.3" cy="148" r="4.1" fill="#fff" fill-opacity="0.85" stroke="#595959" stroke-width="1.1"/><rect x="69" y="147" width="5.6" height="2.1" fill="#0a8a3a"/><path d="M74.3 151.3 L79 156.6" stroke="#595959" stroke-width="2"/></g><path d="M71.5 402 v-5.7 h-9 v13.6 h6.6" fill="#fff" stroke="#6d5f78" stroke-width="1"/><rect x="63.8" y="397.8" width="6.4" height="5.8" fill="#0a8a3a"/><path d="M63.8 405.4 h5 M63.8 407.8 h5" stroke="#0a8a3a" stroke-width="1.4"/><path d="M71.6 402.4 l-2.4 6 l2.3 -1.1 l1.1 2.1 l1.2 -0.6 l-1.1 -2.1 l2.4 -0.3z" fill="#4a4a4a"/><path d="M92.6 402 v-5.7 h-9 v13.6 h6.6" fill="#fff" stroke="#6d5f78" stroke-width="1"/><path d="M85 399 h6 M85 402.6 h4.4 M85 406.2 h5" stroke="#0a8a3a" stroke-width="1.7"/><path d="M92.6 402.4 l-2.4 6 l2.3 -1.1 l1.1 2.1 l1.2 -0.6 l-1.1 -2.1 l2.4 -0.3z" fill="#4a4a4a"/><g transform="translate(21 0)"><path d="M92.6 402 v-5.7 h-9 v13.6 h6.6" fill="#fff" stroke="#c8c8c8" stroke-width="1"/><path d="M85 399 h6 M85 402.6 h4.4 M85 406.2 h5" stroke="#cfcfcf" stroke-width="1.7"/><path d="M92.6 402.4 l-2.4 6 l2.3 -1.1 l1.1 2.1 l1.2 -0.6 l-1.1 -2.1 l2.4 -0.3z" fill="#cfcfcf"/></g><path d="M131.6 398 h13.8 M136.2 397.6 v-1.3 h4.6 v1.3" fill="none" stroke="#595959" stroke-width="1.1"/><path d="M133 399.6 h11 l-1.1 10.4 h-8.8z" fill="#fff" stroke="#595959" stroke-width="1.1"/><path d="M136 401.2 v7.4 M138.5 401.2 v7.4 M141 401.2 v7.4" stroke="#595959" stroke-width="0.9"/><rect x="153.7" y="402.8" width="11.4" height="7.8" fill="#595959"/><path d="M159.39999999999998 404.2 a1.7 1.7 0 0 1 1.1 3 l.6 2.6 h-3.4 l.6 -2.6 a1.7 1.7 0 0 1 1.1 -3z" fill="#fff"/><path d="M156.0 402.8 v-2.6 a3.4 3.6 0 0 1 6.8 0 v2.6" fill="none" stroke="#595959" stroke-width="1.5"/><rect x="173.2" y="402.8" width="10.4" height="7.8" fill="#595959"/><path d="M178.39999999999998 404.2 a1.7 1.7 0 0 1 1.1 3 l.6 2.6 h-3.4 l.6 -2.6 a1.7 1.7 0 0 1 1.1 -3z" fill="#fff"/><path d="M180.6 402.8 v-2.4 a3.5 3.6 0 0 1 7 0 v1.2" fill="none" stroke="#595959" stroke-width="1.5"/><rect x="202" y="397" width="7.6" height="9.6" fill="#fff" stroke="#8a8a9a" stroke-width="1"/><rect x="208.6" y="400.9" width="6.4" height="9.4" fill="#fff" stroke="#d8232a" stroke-width="1.1"/><rect x="222.4" y="396.6" width="14.8" height="3" fill="#2f8fcf"/><path d="M224 398.1 h2 M227.3 398.1 h1.6" stroke="#333" stroke-width="1.6"/><circle cx="231" cy="398.1" r="1.1" fill="#fff"/><path d="M233.4 398.1 h2.4" stroke="#333" stroke-width="1.6"/><path d="M226 399.6 v5.6 M233.6 399.6 v5.6" stroke="#595959" stroke-width="1.1"/><rect x="222.4" y="405.2" width="14.8" height="3.4" fill="#e9a300"/><path d="M223 408 h13.6" stroke="#6a5a3a" stroke-width="1.2" stroke-dasharray="1.6 1"/><g transform="translate(148 253)"><rect x="106.6" y="144" width="5.4" height="1.8" fill="#595959"/><rect x="104.5" y="149" width="9.7" height="2" fill="#595959"/><rect x="102" y="153.3" width="14.7" height="3.5" fill="#595959"/></g><g transform="translate(143.3 252.6)"><rect x="128" y="144.6" width="15" height="3.4" fill="#595959"/><rect x="130.3" y="150.2" width="10.3" height="1.7" fill="#595959"/><rect x="132.8" y="154" width="5.2" height="1.7" fill="#595959"/></g><g transform="translate(86 253)"><path d="M205.8 143.4 h15.2 l-6.3 7 v7.6 h-2.4 v-7.6 z" fill="#595959"/><circle cx="217.3" cy="149" r="2" fill="none" stroke="#595959" stroke-width="0.9"/></g><g transform="translate(107 253)"><path d="M205.8 143.4 h15.2 l-6.3 7 v7.6 h-2.4 v-7.6 z" fill="#cdcdcd"/><circle cx="217.3" cy="149" r="2" fill="none" stroke="#cdcdcd" stroke-width="0.9"/></g><path d="M317.4 400 q-3.6 1 -3.2 5" fill="none" stroke="#8fd3a6" stroke-width="1.3"/><path d="M312.2 403.6 l2 3 l1.8 -3z" fill="#8fd3a6"/><path d="M342 402.3 v7 h12.6 v-7 h-3.4" fill="none" stroke="#595959" stroke-width="1.15"/><path d="M345.2 401.6 v3.4 a1.1 1.1 0 0 0 2.2 0 v-6.6 a2 2 0 0 0 -4 0 v7 a2.9 2.9 0 0 0 5.8 0 v-5.4" fill="none" stroke="#3f6f9f" stroke-width="0.9"/><path d="M945.6 401 q5 -7 10 0" fill="none" stroke="#4a4a4a" stroke-width="1.2"/><path d="M944.6 398.6 l0.3 3.4 l3.2 -1.2z M956.6 398.6 l-0.3 3.4 l-3.2 -1.2z" fill="#4a4a4a"/><rect x="943.4" y="404.6" width="4.4" height="4.6" fill="#555"/><rect x="943.9" y="405" width="3.4" height="2.6" fill="#0a8a3a"/><rect x="953.4" y="404.6" width="4.4" height="4.6" fill="#555"/><rect x="953.9" y="405" width="3.4" height="2.6" fill="#f0ab00"/><path d="M446.5 419 L453.4 430.8 L439.6 430.8Z" fill="#626262"/><path d="M460.6 419.2 L474.4 419.2 L467.5 431Z" fill="#626262"/><path d="M1089.8999999999999 443.4 L1086.3 447 L1089.8999999999999 450.6" fill="none" stroke="#b4b4b4" stroke-width="1.9"/><path d="M1106.6 443.4 L1110.1999999999998 447 L1106.6 450.6" fill="none" stroke="#505050" stroke-width="2.1"/><path d="M1121.2 451.8 v-9.4 h4.4 l1.2 1.8 h5.3 v4.6 M1121.2 451.8 h8.2" fill="none" stroke="#595959" stroke-width="1.9"/><path d="M1133.2 449.6 v3.4 h-3.4z" fill="#595959"/><path d="M1121 442.2 h4.6 l1.2 2 h-5.8z" fill="#595959"/><path d="M137.9 374.1 L135 377 L137.9 379.9" fill="none" stroke="#4a5570" stroke-width="1.3"/><path d="M153.2 374.1 L156.1 377 L153.2 379.9" fill="none" stroke="#4a5570" stroke-width="1.3"/><path d="M1091.3000000000002 374.1 L1088.4 377 L1091.3000000000002 379.9" fill="none" stroke="#4a5570" stroke-width="1.3"/><path d="M1106.4 374.1 L1109.3000000000002 377 L1106.4 379.9" fill="none" stroke="#4a5570" stroke-width="1.3"/><path d="M1123.2 340.6 L1126.2 337.6 L1129.2 340.6" fill="none" stroke="#4a5570" stroke-width="1.3"/><path d="M1123.2 355.4 L1126.2 358.4 L1129.2 355.4" fill="none" stroke="#4a5570" stroke-width="1.3"/></svg>
</body></html>
